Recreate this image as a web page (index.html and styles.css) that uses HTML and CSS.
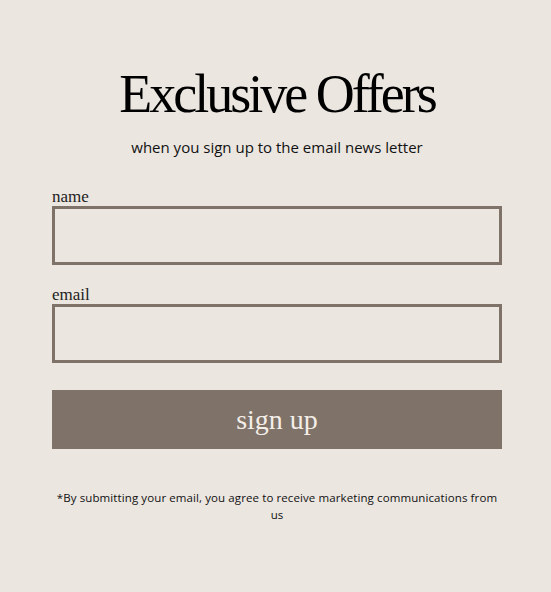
FILE: index.html
```html
<!DOCTYPE html>
<html lang="en">
<head>
  <meta charset="UTF-8" />
  <title>Exclusive Offers</title>
  <link rel="stylesheet" href="styles.css">
</head>
<body>
  <div class="signup">
    <h1>Exclusive Offers</h1>
    <p class="subtitle">when you sign up to the email news letter</p>

    <form class="signup-form">
      <label for="name">name</label>
      <input type="text" id="name" />

      <label for="email">email</label>
      <input type="email" id="email" />

      <button type="button">sign up</button>
    </form>

    <p class="note">*By submitting your email, you agree to receive marketing communications from us</p>
  </div>
</body>
</html>
```

FILE: styles.css
```css
body {
  margin: 0;
  padding: 0 0 0 3px;
  background-color: #ebe6e0;
  font-family: "Liberation Serif", serif;
  color: #111;
}
.signup {
  width: 450px;
  margin: 0 auto;
  padding-top: 64px;
}
h1 {
  margin: 0;
  text-align: center;
  font-family: "Liberation Serif", serif;
  font-weight: normal;
  font-size: 54px;
  line-height: 60px;
  letter-spacing: -3px;
  color: #000;
}
.subtitle {
  margin: 13px 0 0 0;
  text-align: center;
  font-family: "Open Sans", sans-serif;
  font-size: 15px;
  line-height: 20px;
  color: #111;
}
.signup-form {
  display: flex;
  flex-direction: column;
  margin-top: 30px;
}
.signup-form label {
  font-size: 17px;
  line-height: 19px;
  color: #222;
}
.signup-form input {
  box-sizing: border-box;
  width: 450px;
  height: 59px;
  margin: 0 0 20px 0;
  border: 3px solid #7f7268;
  background: transparent;
  outline: none;
}
.signup-form button {
  box-sizing: border-box;
  width: 450px;
  height: 59px;
  margin-top: 7px;
  border: none;
  background-color: #7f7268;
  color: #f3eee8;
  font-family: "Liberation Serif", serif;
  font-size: 28px;
  cursor: pointer;
}
.note {
  margin: 40px 0 0 0;
  text-align: center;
  font-family: "Open Sans", sans-serif;
  font-size: 11.5px;
  line-height: 17px;
  letter-spacing: 0.1px;
  color: #111;
}
```
